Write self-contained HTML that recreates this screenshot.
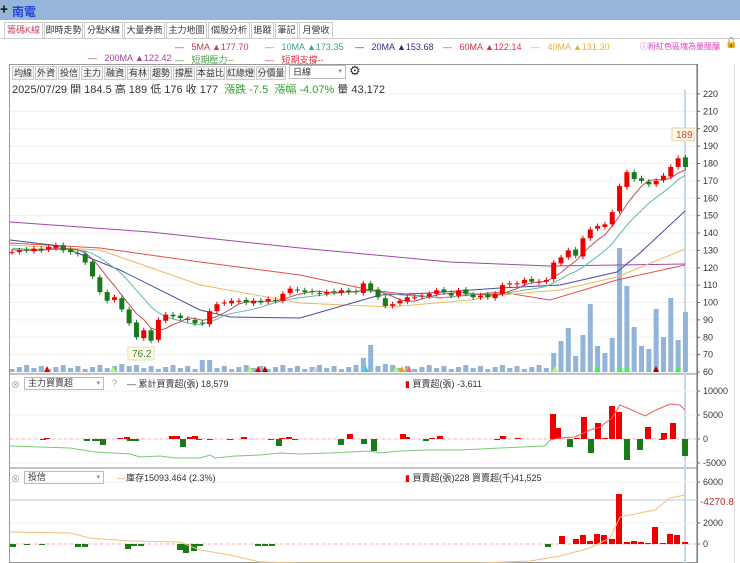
<!DOCTYPE html><html><head><meta charset="utf-8"><style>
*{margin:0;padding:0;box-sizing:border-box}
body{width:740px;height:563px;overflow:hidden;background:#fff;font-family:"Liberation Sans","Noto Sans CJK TC",sans-serif;position:relative;font-size:11px;color:#333}
.abs{position:absolute;white-space:nowrap}
.tab{position:absolute;top:22px;height:17px;border:1px solid #ccc;border-bottom:none;font-size:9px;line-height:15px;text-align:center;background:#fff;color:#333;overflow:hidden}
.tb{position:absolute;top:66px;height:14px;border:1px solid #ccc;background:#f4f4f4;font-size:9px;line-height:12px;text-align:center;color:#333;overflow:hidden}
</style></head><body>
<div class="abs" style="left:0;top:0;width:740px;height:20px;background:#97b5d9"></div>
<div class="abs" style="left:0;top:4px;font-size:8px;color:#222">✚</div>
<div class="abs" style="left:12px;top:3px;font-size:12px;font-weight:bold;color:#2244dd">南電</div>
<div class="tab" style="left:4px;width:39px;color:#d04060">籌碼K線</div>
<div class="tab" style="left:44px;width:39px">即時走勢</div>
<div class="tab" style="left:84px;width:39px">分點K線</div>
<div class="tab" style="left:124px;width:41px">大量券商</div>
<div class="tab" style="left:166px;width:41px">主力地圖</div>
<div class="tab" style="left:208px;width:42px">個股分析</div>
<div class="tab" style="left:251px;width:23px">追蹤</div>
<div class="tab" style="left:275px;width:23px">筆記</div>
<div class="tab" style="left:299px;width:34px">月營收</div>
<div class="abs" style="left:0;top:38px;width:740px;border-top:1px solid #ccc"></div>
<div class="abs" style="left:175px;top:42px;font-size:9px;color:#c04050">—&nbsp;&nbsp;&nbsp;5MA ▲177.70</div>
<div class="abs" style="left:265px;top:42px;font-size:9px;color:#40a090">—&nbsp;&nbsp;&nbsp;10MA ▲173.35</div>
<div class="abs" style="left:355px;top:42px;font-size:9px;color:#303080">—&nbsp;&nbsp;&nbsp;20MA ▲153.68</div>
<div class="abs" style="left:443px;top:42px;font-size:9px;color:#e03040">—&nbsp;&nbsp;&nbsp;60MA ▲122.14</div>
<div class="abs" style="left:531px;top:42px;font-size:9px;color:#e8b040">—&nbsp;&nbsp;&nbsp;40MA ▲131.30</div>
<div class="abs" style="left:640px;top:41px;font-size:8px;color:#e040c0">ⓘ粉紅色區塊為量醞釀</div>
<div class="abs" style="left:725px;top:38px;font-size:10px">🔓</div>
<div class="abs" style="left:88px;top:53px;font-size:9px;color:#a040a0">—&nbsp;&nbsp;&nbsp;200MA ▲122.42</div>
<div class="abs" style="left:175px;top:53px;font-size:9px;color:#30a030">—&nbsp;&nbsp;&nbsp;<span style="color:#40a040">短期壓力--</span></div>
<div class="abs" style="left:265px;top:53px;font-size:9px;color:#e03040">—&nbsp;&nbsp;&nbsp;短期支撐--</div>
<div class="abs" style="left:9px;top:64px;width:689px;height:499px;border:1px solid #999"></div>
<div class="abs" style="left:697px;top:64px;width:38px;height:499px;border-right:1px solid #ddd"></div>
<div class="tb" style="left:12px;width:22px">均線</div><div class="tb" style="left:35px;width:22px">外資</div><div class="tb" style="left:58px;width:22px">投信</div><div class="tb" style="left:81px;width:22px">主力</div><div class="tb" style="left:104px;width:22px">融資</div><div class="tb" style="left:127px;width:22px">有林</div><div class="tb" style="left:150px;width:22px">趨勢</div><div class="tb" style="left:173px;width:22px">撐壓</div><div class="tb" style="left:196px;width:29px">本益比</div><div class="tb" style="left:226px;width:29px">紅綠燈</div><div class="tb" style="left:256px;width:30px">分價量</div>
<div class="abs" style="left:289px;top:65px;width:57px;height:14px;border:1px solid #bbb;font-size:9px;line-height:12px;padding-left:3px;background:#fff">日線<span style="position:absolute;right:3px;font-size:7px;color:#888">▾</span></div>
<div class="abs" style="left:349px;top:63px;font-size:13px;color:#333">⚙</div>
<div class="abs" style="left:12px;top:81px;font-size:11px;color:#333">2025/07/29 開 184.5 高 189 低 176 收 177 &nbsp;<span style="color:#30a030">漲跌 -7.5 &nbsp;漲幅 -4.07%</span> 量 43,172</div>
<svg id="s" class="abs" style="left:0;top:0" width="740" height="563"></svg>
<div class="abs" style="left:24px;top:377px;width:80px;height:13px;border:1px solid #bbb;font-size:9px;line-height:11px;padding-left:3px">主力買賣超<span style="position:absolute;right:3px;font-size:7px;color:#888">▾</span></div>
<div class="abs" style="left:11px;top:378px;font-size:9px;color:#999">⊗</div>
<div class="abs" style="left:112px;top:378px;font-size:9px;color:#999">?</div>
<div class="abs" style="left:127px;top:377px;font-size:9px;color:#333">— 累計買賣超(張) 18,579</div>
<div class="abs" style="left:405px;top:377px;font-size:9px;color:#333"><span style="color:#e00">▮</span> 買賣超(張) -3,611</div>
<div class="abs" style="left:24px;top:471px;width:80px;height:13px;border:1px solid #bbb;font-size:9px;line-height:11px;padding-left:3px">投信<span style="position:absolute;right:3px;font-size:7px;color:#888">▾</span></div>
<div class="abs" style="left:11px;top:472px;font-size:9px;color:#999">⊗</div>
<div class="abs" style="left:117px;top:471px;font-size:9px;color:#333"><span style="color:#f0a050">—</span>庫存15093.464 (2.3%)</div>
<div class="abs" style="left:405px;top:471px;font-size:9px;color:#333"><span style="color:#e00">▮</span> 買賣超(張)228 買賣超(千)41,525</div>
<script>
var S=document.getElementById('s'),h='';
function Y(p){return 94+(220-p)*1.7375}
function L(x1,y1,x2,y2,c,w,d){h+='<line x1="'+x1+'" y1="'+y1+'" x2="'+x2+'" y2="'+y2+'" stroke="'+c+'" stroke-width="'+(w||1)+'"'+(d?' stroke-dasharray="'+d+'"':'')+'/>'}
function R(x,y,w,hh,c){if(hh<0){y+=hh;hh=-hh}h+='<rect x="'+x+'" y="'+y+'" width="'+w+'" height="'+Math.max(hh,1)+'" fill="'+c+'"/>'}
function T(x,y,t,c,s){h+='<text x="'+x+'" y="'+y+'" font-size="'+(s||9)+'" fill="'+(c||'#333')+'" font-family="Liberation Sans">'+t+'</text>'}
function P(pts,c,w){h+='<polyline fill="none" stroke="'+c+'" stroke-width="'+(w||1)+'" points="'+pts.map(function(p){return p[0]+','+p[1]}).join(' ')+'"/>'}
for(var p=60;p<=220;p+=10){L(10,Y(p),697,Y(p),'#f0f0f0');L(697,Y(p),700,Y(p),'#666');T(703,Y(p)+3,p,'#333',9)}
L(697,64,697,563,'#666');
L(10,374,697,374,'#888');L(10,468,697,468,'#888');
L(685,90,685,563,'#c8d6ea',2);
var c=[129,130,130,131,130,132,133,130,129,128,123,115,106,101,103,96,88,80,84,78,90,93,92,91,90,88,88,95,99,100,101,101,100,101,100,102,101,105,108,107,106,106,105,106,106,107,106,106,111,107,103,98,99,101,103,103,104,105,107,106,104,107,105,103,104,103,105,110,111,111,113,112,112,113,123,126,130,127,137,142,144,145,152,167,175,171,170,168,170,173,178,183,178];
var vol=[];for(var i=0;i<c.length;i++)vol[i]=3+((i*7)%5);
vol[15]=8;vol[16]=6;vol[17]=7;vol[26]=12;vol[27]=12;vol[48]=14;vol[49]=27;vol[50]=6;vol[51]=8;
var vt=[353,341,328,356,335,304,346,353,338,248,286,327,346,349,309,337,298,340,312];
for(var k=0;k<vt.length;k++)vol[74+k]=372-vt[k];
for(var i=0;i<c.length;i++){var x=12+i*7.32;R(x-2.5,372-vol[i],5,vol[i],'#92b4d8')}
function ma(n){var o=[];for(var i=0;i<c.length;i++){var s=0;for(var j=0;j<n;j++){s+=i-j>=0?c[i-j]:130+(j-i)*0.3}o.push([12+i*7.32,Y(s/n)])}return o}
P([[10,222],[150,232],[300,248],[450,262],[550,266],[685,264]],'#a048a8');
P([[10,243],[100,248],[200,262],[300,275],[370,290],[440,298],[500,292],[550,300],[617,280],[685,265]],'#e05050');
P([[10,245],[100,250],[200,285],[300,303],[390,307],[470,300],[500,295],[560,290],[617,277],[685,249]],'#f0b860');
P([[10,240],[60,246],[120,270],[200,310],[230,317],[300,318],[380,295],[430,293],[500,288],[560,285],[617,272],[640,253],[685,211]],'#4a4aa8');
P(ma(10),'#60b8a8');P(ma(5),'#c05050');
for(var i=0;i<c.length;i++){var x=12+i*7.32,o=i?c[i-1]+(i%3-1)*0.5:c[0],cl=c[i];var col=cl>=o?'#e00':'#1a7a1a';var hi=Math.max(o,cl)+1.5,lo=Math.min(o,cl)-1.5;L(x,Y(hi),x,Y(lo),col);R(x-2.5,Y(Math.max(o,cl)),5,Math.abs(Y(o)-Y(cl)),col)}
h+='<rect x="128" y="347" width="26" height="13" fill="#fffbe8" stroke="#dde0b0"/>';T(132,357,'76.2','#3a8a3a',10);
h+='<rect x="672" y="128" width="22" height="13" fill="#fffbe8" stroke="#e8d0a0"/>';T(676,138,'189','#e04040',10);
[[47,'#e00'],[113,'#aaff66'],[250,'#aaff66'],[258,'#e00'],[265,'#a00'],[315,'#cce'],[366,'#3ce'],[396,'#aaff66'],[402,'#f90'],[409,'#f66'],[555,'#aaff66'],[597,'#3f3'],[620,'#3f3'],[627,'#3f3'],[656,'#a00'],[678,'#3f3']].forEach(function(m){h+='<polygon points="'+(m[0]-3)+',372 '+(m[0]+3)+',372 '+m[0]+',366" fill="'+m[1]+'"/>'});
var z2=439;[[10000,391],[5000,415],[0,439],[-5000,463]].forEach(function(a){L(697,a[1],700,a[1],'#666');T(703,a[1]+3,a[0],'#333',9);L(10,a[1],697,a[1],'#f2f2f2')});
L(10,z2,697,z2,'#f4b0b0',1,'3,3');
var b2=[[43,-1],[47,1],[87,-2],[95,-2],[100,-2],[103,-6],[120,1],[127,2],[130,-2],[136,-2],[172,3],[177,3],[183,-8],[190,2],[195,3],[199,-1],[210,-1],[230,-1],[244,2],[271,-1],[279,-7],[282,1],[289,2],[295,-1],[341,-6],[350,5],[364,-5],[374,-12],[403,5],[407,2],[432,1],[426,-2],[440,3],[497,-1],[503,3],[518,1],[553,25],[558,11],[570,-8],[577,1],[584,22],[591,-14],[598,16],[605,1],[612,33],[619,27],[627,-21],[640,-11],[648,12],[662,-1],[664,6],[673,16],[685,-17]];
b2.forEach(function(b){R(b[0]-3,z2,6,-b[1],b[1]>=0?'#e00':'#1a7a1a')});
P([[10,446],[40,447],[70,448],[95,452],[130,454],[140,457],[160,456],[175,458],[200,458],[210,455],[215,458],[235,456],[260,455],[280,453],[300,454],[330,453],[370,451],[380,453],[400,451],[430,450],[460,450],[500,448],[545,446],[550,440]],'#78c878');
P([[550,440],[560,438],[575,437],[590,430],[600,427],[612,418],[620,405],[632,410],[645,416],[656,410],[670,404],[680,405],[685,410]],'#e86060');
var z3=544;[[6000,482],[2000,523],[0,544]].forEach(function(a){L(697,a[1],700,a[1],'#666');T(703,a[1]+3,a[0],'#333',9);L(10,a[1],697,a[1],'#f2f2f2')});
L(10,500,697,500,'#b8cbe6');T(700,505,'-4270.8','#c03030',10);
L(10,z3,697,z3,'#f4b0b0',1,'3,3');
var b3=[[13,-3],[27,-1],[42,-1],[78,-3],[85,-3],[128,-5],[134,-2],[141,-2],[180,-6],[186,-9],[194,-7],[200,-2],[258,-2],[265,-2],[272,-2],[548,-3],[562,8],[576,5],[583,9],[590,3],[597,10],[604,9],[612,5],[619,50],[627,2],[634,3],[641,2],[648,1],[655,17],[663,1],[670,10],[677,9],[685,2]];
b3.forEach(function(b){R(b[0]-3,z3,6,-b[1],b[1]>=0?'#e00':'#1a7a1a')});
P([[10,532],[70,533],[90,538],[130,541],[180,542],[200,550],[230,555],[260,562],[300,563],[480,563],[530,561],[560,556],[590,548],[610,538],[620,517],[640,513],[655,510],[670,498],[685,495]],'#f0c080');
S.innerHTML=h;
</script>
</body></html>
